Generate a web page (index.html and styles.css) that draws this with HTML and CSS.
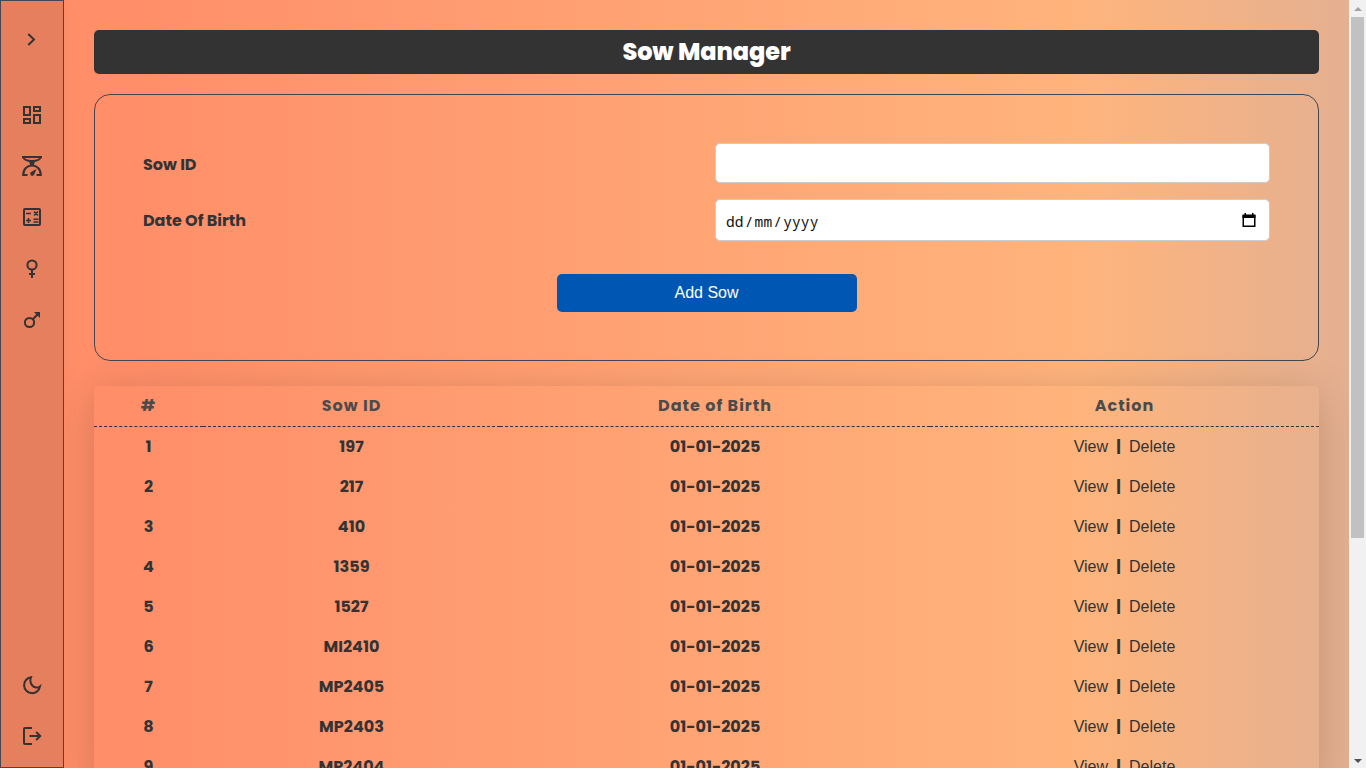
FILE: index.html
```html
<!DOCTYPE html>
<html lang="en">
<head>
<meta charset="utf-8">
<title>Sow Manager</title>
<link rel="stylesheet" href="styles.css">
</head>
<body>
<div class="app">
  <nav class="sidebar">
    <svg class="icon toggle" viewBox="0 0 24 24"><path d="M9 6.700l5 4.800-5 4.800"/></svg>
    <svg class="icon" viewBox="0 0 24 24"><path d="M4 4h6v8H4zM14 4h6v4h-6zM4 16h6v4H4zM14 12h6v8h-6z"/></svg>
    <svg class="icon" viewBox="0 0 24 24"><path d="M2 3h20M3 3c1 3 4 4 9 4s8-1 9-4M12 7v5M7.500 21H3.200c0-6 4-9.500 8.800-9.500s8.800 3.500 8.800 9.500h-4.300"/><path class="solid" d="M16.500 15l-2.200 5.200c-.5 1.500-2.300 2.200-3.400 1.100-1.200-1.200-.7-2.800.5-3.500zM9 7.500h6L13.500 12h-3z"/></svg>
    <svg class="icon calc" viewBox="0 0 24 24"><rect x="4" y="4" width="16" height="16" rx="1"/><path class="thin" d="M6 8.500h5M14 6.500l4 4M18 6.500l-4 4M6 15.500h5M8.500 13v5M13.500 14.200h5M13.500 17h5"/></svg>
    <svg class="icon" viewBox="0 0 24 24"><circle cx="12" cy="8" r="4.600"/><path d="M12 12.600V21M9 17h6"/></svg>
    <svg class="icon" viewBox="0 0 24 24"><circle cx="9.500" cy="14.500" r="4.600"/><path d="M12.800 11.200L18 6"/><path class="solid" d="M14 4h6v6z"/></svg>
    <svg class="icon moon" viewBox="0 0 24 24"><path d="M11 4.200a8 8 0 1 0 9 9.200c-2 1.800-6 1.600-8-1.200-1.800-2.500-2-5.500-1-8z"/></svg>
    <svg class="icon" viewBox="0 0 24 24"><path d="M12 4H5q-1 0-1 1v14q0 1 1 1h7M9.500 12H20M16.200 8l4 4-4 4"/></svg>
  </nav>
  <main class="content">
    <h1 class="title">Sow Manager</h1>
    <form class="form">
      <div class="field"><label class="lower" for="sow">Sow ID</label><input class="control" id="sow" type="text"></div>
      <div class="field"><label>Date Of Birth</label>
        <div class="control date"><span>dd<i class="slash">/</i>mm<i class="slash">/</i>yyyy</span>
          <svg class="calendar" viewBox="0 0 14 15"><path d="M1.250 3h11.500v10.250H1.250z"/><path class="bar" d="M.5 1.500h13V5H.5zM2.500 0H4v2H2.500zM10 0h1.500v2H10z"/></svg>
        </div>
      </div>
      <button class="submit" type="button">Add Sow</button>
    </form>
    <table class="table">
      <thead><tr><th class="c1">#</th><th class="c2">Sow ID</th><th class="c3">Date of Birth</th><th class="c4">Action</th></tr></thead>
      <tbody>
        <tr><td>1</td><td>197</td><td>01-01-2025</td><td><a>View</a><b class="sep">|</b><a>Delete</a></td></tr>
        <tr><td>2</td><td>217</td><td>01-01-2025</td><td><a>View</a><b class="sep">|</b><a>Delete</a></td></tr>
        <tr><td>3</td><td>410</td><td>01-01-2025</td><td><a>View</a><b class="sep">|</b><a>Delete</a></td></tr>
        <tr><td>4</td><td>1359</td><td>01-01-2025</td><td><a>View</a><b class="sep">|</b><a>Delete</a></td></tr>
        <tr><td>5</td><td>1527</td><td>01-01-2025</td><td><a>View</a><b class="sep">|</b><a>Delete</a></td></tr>
        <tr><td>6</td><td>MI2410</td><td>01-01-2025</td><td><a>View</a><b class="sep">|</b><a>Delete</a></td></tr>
        <tr><td>7</td><td>MP2405</td><td>01-01-2025</td><td><a>View</a><b class="sep">|</b><a>Delete</a></td></tr>
        <tr><td>8</td><td>MP2403</td><td>01-01-2025</td><td><a>View</a><b class="sep">|</b><a>Delete</a></td></tr>
        <tr><td>9</td><td>MP2404</td><td>01-01-2025</td><td><a>View</a><b class="sep">|</b><a>Delete</a></td></tr>
      </tbody>
    </table>
  </main>
  <div class="scrollbar"><i class="up"></i><div class="thumb"></div><i class="down"></i></div>
</div>
</body>
</html>
```
FILE: styles.css
```css
* { box-sizing: border-box; }
body { margin: 0; overflow: hidden; color: #333; font-family: Poppins, Inter, "Open Sans", sans-serif; }
.app { display: flex; width: 1366px; height: 768px; overflow: hidden; background: linear-gradient(90deg, #ff8e69 9%, #ffb47c 79%, #e4b091 98.8%); }
.sidebar { width: 64px; height: 768px; flex: none; display: flex; flex-direction: column; align-items: center; gap: 27px; padding-top: 27px; border: 1px solid #444750; background: rgba(0, 0, 0, .1); box-shadow: 0 0 20px rgba(0, 0, 0, .03); position: relative; z-index: 1; }
.icon { width: 24px; height: 24px; flex: none; fill: none; stroke: #333; stroke-width: 2; }
.icon .solid { fill: #333; stroke: none; }
.icon .thin { stroke-width: 1.6; }
.toggle { margin-bottom: 24px; stroke-linecap: square; }
.calc { margin-bottom: 1px; }
.moon { margin-top: auto; }
.sidebar .icon:last-child { margin-bottom: 19px; }
.content { width: 1285px; height: 768px; flex: none; padding: 30px 30px 0; overflow: hidden; }
.title { margin: 0 0 20px; height: 44px; border-radius: 5px; background: #333; color: #fff; font-size: 24px; line-height: 43px; font-weight: 800; letter-spacing: -.1px; text-align: center; }
.form { height: 267px; border: 1px solid #444750; border-radius: 16px; padding: 48px; display: flex; flex-direction: column; align-items: center; }
.field { width: 100%; display: flex; justify-content: space-between; align-items: center; margin-bottom: 16px; font-size: 16px; font-weight: 700; letter-spacing: -.03px; }
.lower { padding-top: 2px; }
.control { width: 555px; height: 40px; border: 1px solid #ccc; border-radius: 5px; background: #fff; }
.date { height: 42px; display: flex; justify-content: space-between; align-items: center; padding: 1px 13px 0 10px; }
.date span { color: #111; font: 400 14.5px/20px "Noto Sans Mono", monospace; letter-spacing: .15px; }
.slash { font-style: normal; padding: 0 1px; }
.calendar { width: 14px; height: 15px; fill: none; stroke: #000; stroke-width: 1.5; }
.calendar .bar { fill: #000; stroke: none; }
.submit { width: 300px; height: 38px; margin-top: 17px; border: 0; border-radius: 5px; background: #0056b3; color: #fff; font: 16px "Liberation Sans", Arial, sans-serif; }
.table { width: 1225px; margin-top: 25px; table-layout: fixed; border-collapse: separate; border-spacing: 0; border-radius: 5px; box-shadow: 0 8px 44px rgba(0, 0, 0, .17); text-align: center; font-size: 16px; font-weight: 700; }
.table th { height: 41px; padding: 0 0 2px; border-bottom: 1px dashed #333; color: #4b4b4b; letter-spacing: 1px; }
.table td { height: 40px; padding: 0 0 1px; }
.c1 { width: 109px; }
.c2 { width: 297px; }
.c3 { width: 430px; }
.table a { font-family: "Liberation Sans", Arial, sans-serif; font-weight: 400; }
.sep { display: inline-block; width: 21px; font-weight: 700; }
.scrollbar { width: 17px; height: 768px; flex: none; display: flex; flex-direction: column; align-items: center; background: #f1f1f1; padding: 7px 0 5px; }
.up, .down { border: 4px solid transparent; }
.up { border-top: 0; border-bottom: 4px solid #a3a3a3; }
.thumb { width: 13px; height: 521px; margin-top: 6px; background: #c1c1c1; }
.down { margin-top: auto; border-bottom: 0; border-top: 4px solid #505050; }
```
